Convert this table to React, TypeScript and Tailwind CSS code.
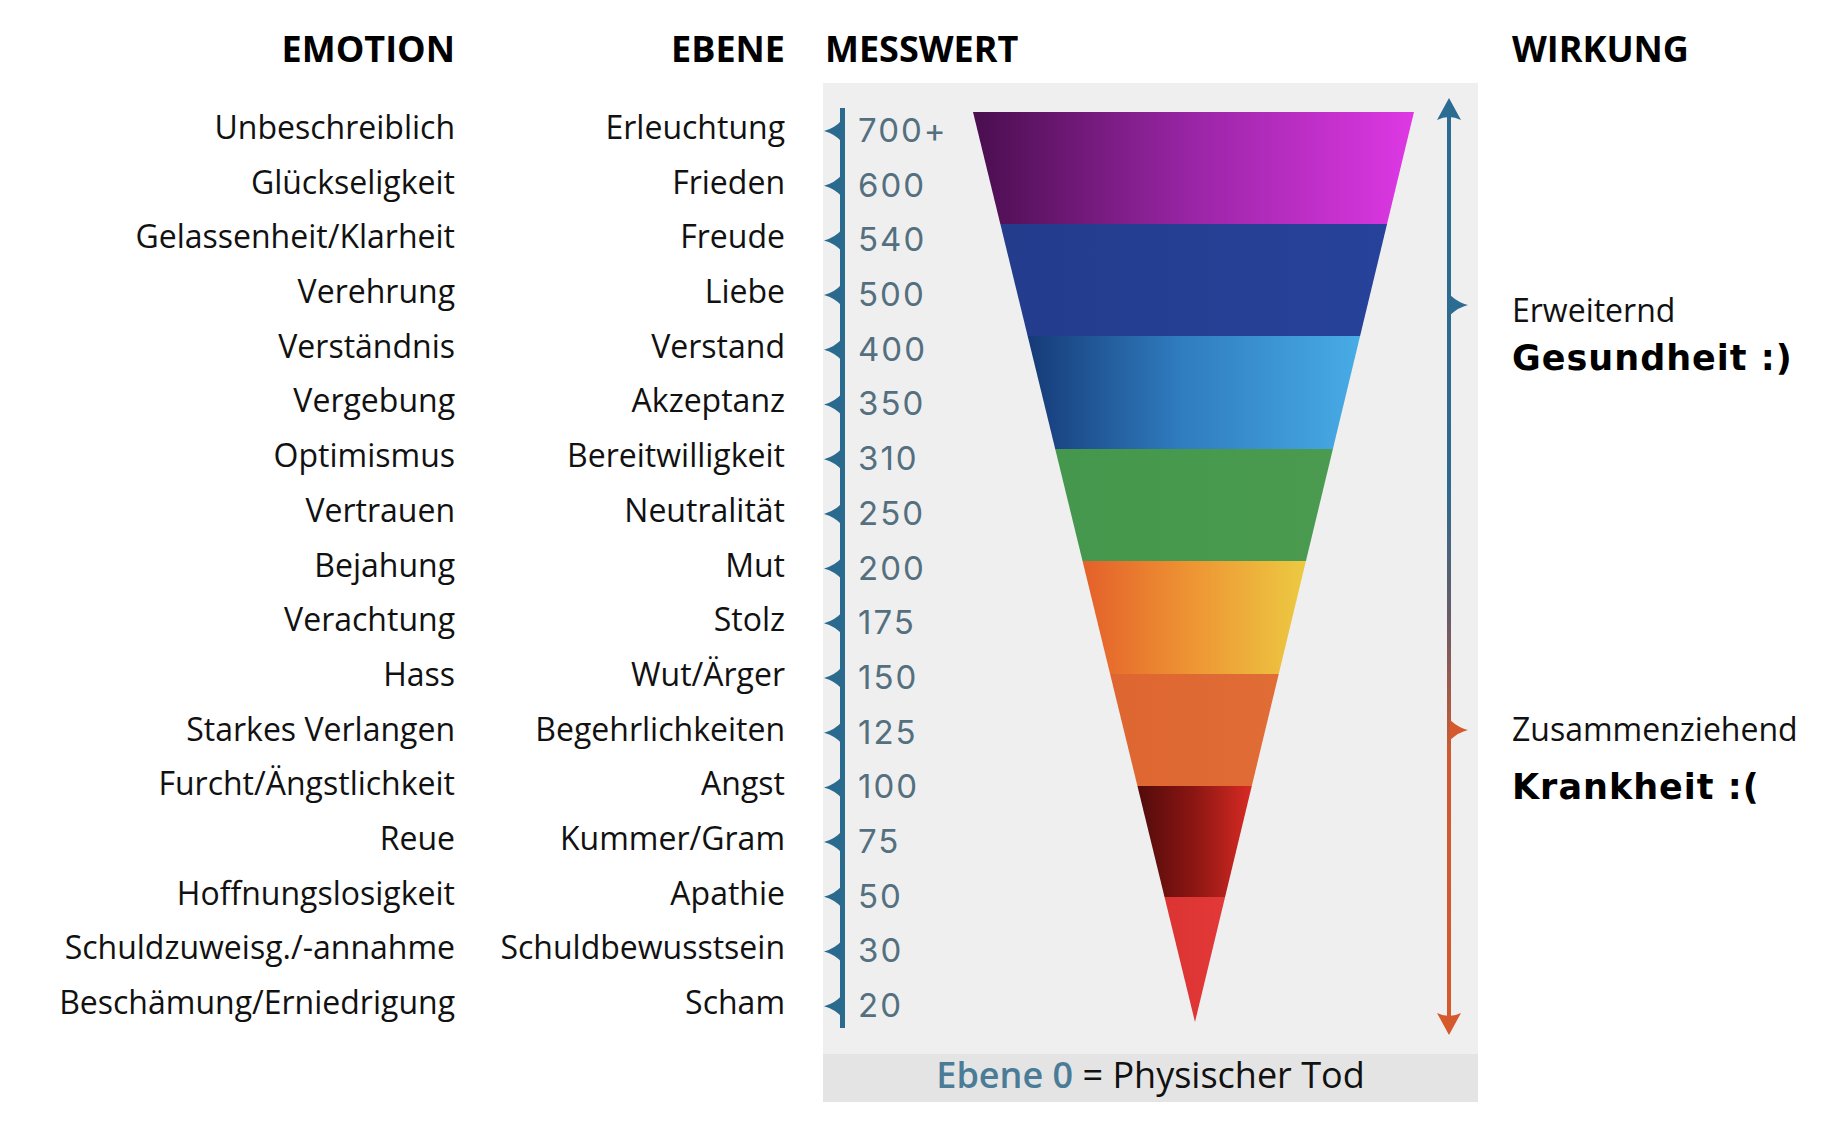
const ROWS: [string, string, string][] = [
  ["Unbeschreiblich", "Erleuchtung", "700+"],
  ["Glückseligkeit", "Frieden", "600"],
  ["Gelassenheit/Klarheit", "Freude", "540"],
  ["Verehrung", "Liebe", "500"],
  ["Verständnis", "Verstand", "400"],
  ["Vergebung", "Akzeptanz", "350"],
  ["Optimismus", "Bereitwilligkeit", "310"],
  ["Vertrauen", "Neutralität", "250"],
  ["Bejahung", "Mut", "200"],
  ["Verachtung", "Stolz", "175"],
  ["Hass", "Wut/Ärger", "150"],
  ["Starkes Verlangen", "Begehrlichkeiten", "125"],
  ["Furcht/Ängstlichkeit", "Angst", "100"],
  ["Reue", "Kummer/Gram", "75"],
  ["Hoffnungslosigkeit", "Apathie", "50"],
  ["Schuldzuweisg./-annahme", "Schuldbewusstsein", "30"],
  ["Beschämung/Erniedrigung", "Scham", "20"],
];

const ROW_H = 54.7;

// funnel geometry (panel-relative coords)
const TOP_Y = 29;
const TIP_Y = 939;
const TIP_X = 222;
const W = 441;
const BAND_YS = [29, 141, 253, 366, 478, 591, 703, 814];
const BAND_FILLS = ["g-purple", "g-navy", "g-sky", "g-green", "g-sun", "g-orange", "g-blood", "g-red"];

function xl(y: number) {
  return (TIP_X * (y - TOP_Y)) / (TIP_Y - TOP_Y);
}
function xr(y: number) {
  return W - ((W - TIP_X) * (y - TOP_Y)) / (TIP_Y - TOP_Y);
}

function Funnel() {
  return (
    <svg width={W} height={971} viewBox={`0 0 ${W} 971`} className="shrink-0">
      <defs>
        <linearGradient id="g-purple">
          <stop offset="0" stopColor="#4a0e4e" />
          <stop offset="0.5" stopColor="#9a25a6" />
          <stop offset="1" stopColor="#de38e4" />
        </linearGradient>
        <linearGradient id="g-navy">
          <stop offset="0" stopColor="#233c8c" />
          <stop offset="1" stopColor="#27429a" />
        </linearGradient>
        <linearGradient id="g-sky">
          <stop offset="0" stopColor="#163a78" />
          <stop offset="0.45" stopColor="#2f7bbd" />
          <stop offset="1" stopColor="#48ace6" />
        </linearGradient>
        <linearGradient id="g-green">
          <stop offset="0" stopColor="#44974c" />
          <stop offset="1" stopColor="#4a9b4f" />
        </linearGradient>
        <linearGradient id="g-sun">
          <stop offset="0" stopColor="#e4602a" />
          <stop offset="0.5" stopColor="#ee9634" />
          <stop offset="1" stopColor="#ecca42" />
        </linearGradient>
        <linearGradient id="g-orange">
          <stop offset="0" stopColor="#de6631" />
          <stop offset="1" stopColor="#e06c36" />
        </linearGradient>
        <linearGradient id="g-blood">
          <stop offset="0" stopColor="#520b0b" />
          <stop offset="0.5" stopColor="#8c1613" />
          <stop offset="1" stopColor="#d82b23" />
        </linearGradient>
        <linearGradient id="g-red">
          <stop offset="0" stopColor="#dc3333" />
          <stop offset="1" stopColor="#e23838" />
        </linearGradient>
      </defs>
      {BAND_YS.map((y0, i) => {
        const y1 = i < BAND_YS.length - 1 ? BAND_YS[i + 1] : TIP_Y;
        const pts =
          i < BAND_YS.length - 1
            ? `${xl(y0)},${y0} ${xr(y0)},${y0} ${xr(y1)},${y1} ${xl(y1)},${y1}`
            : `${xl(y0)},${y0} ${xr(y0)},${y0} ${TIP_X},${y1}`;
        return <polygon key={i} points={pts} fill={`url(#${BAND_FILLS[i]})`} />;
      })}
    </svg>
  );
}

function Ruler() {
  return (
    <svg width={24} height={971} viewBox="0 0 24 971" className="shrink-0">
      <rect x={17} y={25} width={5} height={920} fill="#2b6a8f" />
      {ROWS.map((_, i) => {
        const cy = 48 + i * ROW_H;
        return (
          <path
            key={i}
            d={`M19 ${cy - 11} Q12 ${cy - 3} 1 ${cy} Q12 ${cy + 3} 19 ${cy + 11} Z`}
            fill="#2b6a8f"
          />
        );
      })}
    </svg>
  );
}

function EffectArrow() {
  return (
    <svg width={64} height={971} viewBox="0 0 64 971" className="shrink-0">
      <defs>
        <linearGradient id="g-line" gradientUnits="userSpaceOnUse" x1="0" y1="15" x2="0" y2="952">
          <stop offset="0" stopColor="#2c6b92" />
          <stop offset="0.42" stopColor="#2f6a8d" />
          <stop offset="0.56" stopColor="#6b5a66" />
          <stop offset="0.7" stopColor="#cf5a30" />
          <stop offset="1" stopColor="#d5592c" />
        </linearGradient>
      </defs>
      <rect x={33} y={28} width={4} height={910} fill="url(#g-line)" />
      <path d="M35 15 L47 37 Q35 31 23 37 Z" fill="#2c6b92" />
      <path d="M35 952 L47 930 Q35 936 23 930 Z" fill="#d5592c" />
      <path d="M36 212 Q45 220 54 222 Q45 224 36 232 Z" fill="#2c6b92" />
      <path d="M36 637 Q45 645 54 647 Q45 649 36 657 Z" fill="#d5592c" />
    </svg>
  );
}

export default function App() {
  return (
    <div className="w-[1836px] h-[1128px] bg-white flex font-['Open_Sans',sans-serif] text-[#111]">
      {/* Emotion */}
      <div className="w-[455px] shrink-0 flex flex-col items-end pt-[31px]">
        <h2 className="h-[36px] text-[36px] leading-none font-bold text-black">EMOTION</h2>
        <div className="mt-[33px] flex flex-col items-end">
          {ROWS.map(r => (
            <div key={r[0]} className="h-[54.7px] leading-[54.7px] text-[32px] whitespace-nowrap">{r[0]}</div>
          ))}
        </div>
      </div>

      {/* Ebene */}
      <div className="w-[330px] shrink-0 flex flex-col items-end pt-[31px]">
        <h2 className="h-[36px] text-[36px] leading-none font-bold text-black">EBENE</h2>
        <div className="mt-[33px] flex flex-col items-end">
          {ROWS.map(r => (
            <div key={r[1]} className="h-[54.7px] leading-[54.7px] text-[32px] whitespace-nowrap">{r[1]}</div>
          ))}
        </div>
      </div>

      {/* Messwert + chart */}
      <div className="ml-[38px] w-[655px] shrink-0 flex flex-col pt-[31px]">
        <h2 className="h-[36px] pl-[2px] text-[36px] leading-none font-bold text-black">MESSWERT</h2>
        <div className="mt-[16px] h-[1019px] bg-[#efefef] flex flex-col">
          <div className="h-[971px] flex">
            <Ruler />
            <div className="w-[126px] shrink-0 pl-[11px] pt-[20px] flex flex-col font-['Inter',sans-serif] text-[33px] text-[#54707f] tracking-[2px]">
              {ROWS.map(r => (
                <div key={r[2]} className="h-[54.7px] leading-[54.7px] whitespace-nowrap">{r[2]}</div>
              ))}
            </div>
            <Funnel />
            <EffectArrow />
          </div>
          <div className="h-[48px] bg-[#e4e4e4] pt-[3px] text-center text-[36px] leading-none whitespace-nowrap">
            <span className="text-[#4a7c98] font-semibold">Ebene 0</span> = Physischer Tod
          </div>
        </div>
      </div>

      {/* Wirkung */}
      <div className="ml-[34px] flex flex-col pt-[31px]">
        <h2 className="h-[36px] text-[36px] leading-none font-bold text-black">WIRKUNG</h2>
        <div className="mt-[227px] text-[32px] leading-none">Erweiternd</div>
        <div className="mt-[15px] text-[35px] leading-none font-bold tracking-[1px] font-['DejaVu_Sans',sans-serif] text-black">Gesundheit :)</div>
        <div className="mt-[337px] text-[32px] leading-none">Zusammenziehend</div>
        <div className="mt-[25px] text-[35px] leading-none font-bold tracking-[1px] font-['DejaVu_Sans',sans-serif] text-black">Krankheit :(</div>
      </div>
    </div>
  );
}
